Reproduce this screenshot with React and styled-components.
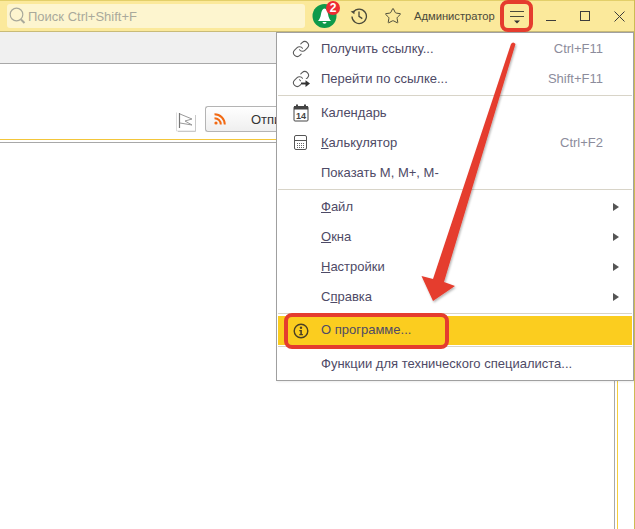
import React from 'react'
import styled, {createGlobalStyle} from 'styled-components'
import {Link, Star} from 'lucide-react'

const GlobalStyle = createGlobalStyle`
  html, body {
    margin: 0;
    padding: 0;
    background: #fff;
  }
  body {
    font-family: "Liberation Sans", Arial, sans-serif;
  }
`

const GoLinkIcon = () => (
  <svg width="18" height="18" viewBox="0 0 24 24" fill="none" stroke="#5a5a5a" strokeWidth="1.4" strokeLinecap="round">
    <path d="M10 13a5 5 0 0 0 7.54.54l3-3a5 5 0 0 0-7.07-7.07l-1.72 1.71"/>
    <path d="M14 11a5 5 0 0 0-7.54-.54l-3 3a5 5 0 0 0 7.07 7.07l1.71-1.71"/>
    <rect x="12" y="12" width="12" height="12" fill="#fff" stroke="none"/>
    <path d="M12 18 h7" stroke="#333" strokeWidth="2.6" strokeLinecap="butt"/>
    <path d="M18 13.5 L24 18 L18 22.5 Z" fill="#333" stroke="none"/>
  </svg>
)

const CalendarIcon = () => (
  <svg width="16" height="18" viewBox="0 0 16 18" fill="none">
    <rect x="1" y="2.5" width="14" height="14.5" rx="1" stroke="#444"/>
    <rect x="1" y="2" width="14" height="3.5" fill="#444"/>
    <rect x="3" y="0.5" width="2" height="3" fill="#444"/>
    <rect x="11" y="0.5" width="2" height="3" fill="#444"/>
    <text x="8" y="14.5" textAnchor="middle" fontSize="9" fontWeight="700" fontFamily="Liberation Sans" fill="#444">14</text>
  </svg>
)

const CalculatorIcon = () => (
  <svg width="14" height="16" viewBox="0 0 14 16" fill="none">
    <rect x="0.5" y="0.5" width="12" height="14" rx="1.5" stroke="#555"/>
    <path d="M1 5.5 h11" stroke="#555"/>
    <path d="M3 8.5 h7 M3 10.5 h7 M3 12.5 h7" stroke="#666" strokeDasharray="1 1"/>
  </svg>
)

const InfoIcon = () => (
  <svg width="16" height="16" viewBox="0 0 16 16" fill="none">
    <circle cx="8" cy="8" r="6.8" stroke="#4a4026" strokeWidth="1.4"/>
    <circle cx="8" cy="4.8" r="1.2" fill="#4a4026"/>
    <path d="M6.3 7 h2.6 v4 h1 v1.2 h-3.6 v-1.2 h1 v-2.8 h-1 z" fill="#4a4026"/>
  </svg>
)

const SearchIcon = () => (
  <svg width="17" height="18" viewBox="0 0 17 18" fill="none" stroke="#a9a99b">
    <circle cx="7.5" cy="7.5" r="6.3" strokeWidth="1.2"/>
    <path d="M12 12.5 L15.5 16" strokeWidth="2"/>
  </svg>
)

const BellIcon = () => (
  <svg width="25" height="24" viewBox="0 0 25 24">
    <circle cx="12.5" cy="12" r="12" fill="#0f9a4b"/>
    <path d="M12.5 4.5 C10.5 4.5 9.5 7 9 10 C8.6 13 7.5 15.5 6 17 H19 C17.5 15.5 16.4 13 16 10 C15.5 7 14.5 4.5 12.5 4.5 Z" fill="#fff"/>
    <path d="M10.5 18 h4 a2 1.8 0 0 1 -4 0 z" fill="#fff"/>
  </svg>
)

const HistoryIcon = () => (
  <svg width="18" height="18" viewBox="0 0 18 18" fill="none" stroke="#4a4a3a" strokeWidth="1.3">
    <path d="M3.3 5.2 A7.2 7.2 0 1 1 2 9.5"/>
    <path d="M0.6 4.6 L4.6 3.4 L4.4 7.2 Z" fill="#4a4a3a" stroke="none"/>
    <path d="M9 4.5 V9.3 L12.3 11.6"/>
  </svg>
)

const MenuGlyph = () => (
  <svg width="16" height="16" viewBox="0 0 16 16">
    <path d="M1 2.5 H15 M1 7.5 H15" stroke="#4a4a3a" strokeWidth="1"/>
    <path d="M5 11.5 H11 L8 14.5 Z" fill="#333"/>
  </svg>
)

const MinimizeIcon = () => (
  <svg width="10" height="10" viewBox="0 0 10 10"><path d="M0 9.5 H10" stroke="#3c3c3c"/></svg>
)

const MaximizeIcon = () => (
  <svg width="10" height="10" viewBox="0 0 10 10" fill="none"><rect x="0.5" y="0.5" width="9" height="9" stroke="#3c3c3c"/></svg>
)

const CloseIcon = () => (
  <svg width="11" height="11" viewBox="0 0 11 11"><path d="M0.5 0.5 L10.5 10.5 M10.5 0.5 L0.5 10.5" stroke="#3c3c3c" strokeWidth="1"/></svg>
)

const FlagIcon = () => (
  <svg width="20" height="20" viewBox="0 0 20 20" fill="none">
    <path d="M0.5 0.5 V19 H19" stroke="#ddd"/>
    <path d="M19.5 3 V19.5 H2" stroke="#c9c9c9"/>
    <path d="M3.5 1 V16" stroke="#777" strokeWidth="1.2"/>
    <path d="M4 2 L16 7 L9 9 L16 13 L4 11" stroke="#999"/>
  </svg>
)

const RssIcon = () => (
  <svg width="12" height="12" viewBox="0 0 12 12" fill="none" stroke="#f26a14" strokeWidth="2">
    <circle cx="2" cy="10" r="1.6" fill="#f26a14" stroke="none"/>
    <path d="M0.5 5.2 A6.3 6.3 0 0 1 6.8 11.5"/>
    <path d="M0.5 1.2 A10.3 10.3 0 0 1 10.8 11.5"/>
  </svg>
)

const top_items = [
  {icon: <Link size={18} strokeWidth={1.4} color="#5a5a5a" />, label: 'Получить ссылку...', shortcut: 'Ctrl+F11'},
  {icon: <GoLinkIcon />, label: 'Перейти по ссылке...', shortcut: 'Shift+F11'},
]
const tool_items = [
  {icon: <CalendarIcon />, label: <>Кален<u>д</u>арь</>},
  {icon: <CalculatorIcon />, label: <><u>К</u>алькулятор</>, shortcut: 'Ctrl+F2'},
  {label: 'Показать M, M+, M-'},
]
const sub_items = [
  <><u>Ф</u>айл</>,
  <><u>О</u>кна</>,
  <><u>Н</u>астройки</>,
  <>С<u>п</u>равка</>,
]

const MenuRow = ({icon, label, shortcut, arrow, active}) => (
  <Row $active={active}>
    <RowIcon>{icon}</RowIcon>
    <RowLabel>{label}</RowLabel>
    {shortcut && <Shortcut>{shortcut}</Shortcut>}
    {arrow && <SubArrow />}
  </Row>
)

export default function App() {
  return (
    <Page>
      <GlobalStyle />
      <TitleBar>
        <SearchField>
          <SearchIcon />
          <SearchText>Поиск Ctrl+Shift+F</SearchText>
        </SearchField>
        <Bell>
          <BellIcon />
          <Badge>2</Badge>
        </Bell>
        <ToolIcon $gap={13}><HistoryIcon /></ToolIcon>
        <ToolIcon $gap={16}><Star size={18} strokeWidth={1.3} color="#4a4a3a" /></ToolIcon>
        <UserName>Администратор</UserName>
        <MenuButton><MenuGlyph /></MenuButton>
        <WindowButtons>
          <MinimizeIcon />
          <MaximizeIcon />
          <CloseIcon />
        </WindowButtons>
      </TitleBar>
      <SubBar />
      <ToolArea>
        <FlagIcon />
        <FeedButton>
          <RssIcon />
          <FeedText>Отпи</FeedText>
        </FeedButton>
      </ToolArea>
      <Content>
        <ContentPane />
      </Content>

      <Menu>
        {top_items.map((item) => <MenuRow key={item.shortcut} {...item} />)}
        <Separator />
        {tool_items.map((item, index) => <MenuRow key={index} {...item} />)}
        <Separator />
        {sub_items.map((label, index) => <MenuRow key={index} label={label} arrow />)}
        <Separator />
        <MenuRow icon={<InfoIcon />} label="О программе..." active />
        <Separator />
        <MenuRow label="Функции для технического специалиста..." />
      </Menu>

      <Annotation viewBox="0 0 635 529">
        <defs>
          <filter id="arrow-shadow" x="-20%" y="-20%" width="140%" height="140%">
            <feDropShadow dx="1" dy="1.5" stdDeviation="1" floodColor="#000" floodOpacity="0.3" />
          </filter>
        </defs>
        <rect x="502" y="2" width="29" height="28" rx="6" fill="none" stroke="#e53c2e" strokeWidth="4" />
        <rect x="286" y="315" width="161" height="32" rx="6" fill="none" stroke="#e53c2e" strokeWidth="4" />
        <path
          d="M511 44 Q513 41 515.5 44 L444 282 L455 286 L433 301 L421.5 276 L433 279 Z"
          fill="#e53c2e"
          filter="url(#arrow-shadow)"
        />
      </Annotation>
    </Page>
  )
}

const Page = styled.div`
  position: relative;
  width: 635px;
  height: 529px;
  overflow: hidden;
  display: flex;
  flex-direction: column;
  box-sizing: border-box;
  border-right: 1px solid #cdbb55;
  background: #fff;
`
const TitleBar = styled.div`
  height: 32px;
  box-sizing: border-box;
  flex: none;
  display: flex;
  align-items: center;
  padding-left: 7px;
  background: #fbe99b;
  border-top: 1px solid #e3cf6a;
  border-bottom: 1px solid #c9bb78;
`
const SearchField = styled.div`
  width: 298px;
  height: 24px;
  box-sizing: border-box;
  flex: none;
  display: flex;
  align-items: center;
  gap: 1px;
  padding-left: 2px;
  background: #fdf5cf;
  border-radius: 3px;
`
const SearchText = styled.span`
  font-size: 13px;
  color: #a9a99b;
  margin-left: 1px;
`
const Bell = styled.div`
  position: relative;
  flex: none;
  width: 25px;
  height: 24px;
  margin-left: 7px;
  & > svg {
    display: block;
  }
`
const Badge = styled.div`
  position: absolute;
  top: -3px;
  left: 14px;
  width: 14px;
  height: 14px;
  border-radius: 50%;
  background: #ee2b33;
  color: #fff;
  font-size: 12px;
  font-weight: 700;
  line-height: 14px;
  text-align: center;
`
const ToolIcon = styled.div`
  flex: none;
  width: 18px;
  height: 18px;
  display: flex;
  align-items: center;
  justify-content: center;
  margin-left: ${({$gap}) => $gap}px;
`
const UserName = styled.span`
  font-size: 11.2px;
  color: #4a4a3a;
  margin: 0 14px 0 12px;
  white-space: nowrap;
`
const MenuButton = styled.div`
  flex: none;
  width: 16px;
  height: 16px;
  margin-top: 2px;
  & > svg {
    display: block;
  }
`
const WindowButtons = styled.div`
  flex: none;
  display: flex;
  align-items: center;
  gap: 24px;
  margin-left: 21px;
`
const SubBar = styled.div`
  height: 32px;
  box-sizing: border-box;
  flex: none;
  background: #f0f0f0;
  border-bottom: 1px solid #a8a8a8;
`
const ToolArea = styled.div`
  height: 76px;
  box-sizing: border-box;
  flex: none;
  display: flex;
  align-items: flex-start;
  gap: 9px;
  padding: 48px 0 0 176px;
  border-bottom: 1px solid #f3c63a;
`
const FeedButton = styled.div`
  width: 71px;
  height: 26px;
  box-sizing: border-box;
  margin-top: -6px;
  display: flex;
  align-items: center;
  padding-left: 8px;
  overflow: hidden;
  white-space: nowrap;
  border: 1px solid #b4b4b4;
  border-right: none;
  border-radius: 3px 0 0 3px;
  background: linear-gradient(#ffffff, #efefef);
  & > svg {
    flex: none;
  }
`
const FeedText = styled.span`
  flex: none;
  font-size: 13px;
  color: #333;
  margin-left: 25px;
`
const Content = styled.div`
  flex: 1;
  padding-top: 2px;
  display: flex;
  flex-direction: column;
`
const ContentPane = styled.div`
  flex: 1;
  width: 618px;
  box-sizing: border-box;
  border-top: 1px solid #a8a8a8;
  border-right: 1px solid #f6cf3c;
  position: relative;
  &::after {
    content: '';
    position: absolute;
    top: 0;
    bottom: 0;
    right: 2px;
    width: 1px;
    background: #a8a8a8;
  }
`
const Menu = styled.div`
  position: absolute;
  top: 32px;
  left: 276px;
  width: 358px;
  height: 349px;
  box-sizing: border-box;
  padding-top: 1px;
  background: #fff;
  border: 1px solid #a0a0a0;
  box-shadow: 1px 1px 2px rgba(0, 0, 0, 0.08);
`
const Row = styled.div`
  height: ${({$active}) => $active ? '29px' : '30px'};
  display: flex;
  align-items: center;
  padding: 0 13px 0 0;
  margin: 0 1px ${({$active}) => $active ? '1px' : '0'};
  font-size: 13px;
  color: #4e4a66;
  background: ${({$active}) => $active ? '#fbcd1f' : 'transparent'};
`
const RowIcon = styled.div`
  width: 43px;
  box-sizing: border-box;
  padding-left: 3px;
  display: flex;
  justify-content: center;
  flex: none;
  & > svg {
    display: block;
  }
`
const RowLabel = styled.span`
  flex: 1;
  white-space: nowrap;
  padding-bottom: 2px;
`
const Shortcut = styled.span`
  color: #8c8c9c;
  padding: 0 16px 2px 0;
`
const SubArrow = styled.div`
  width: 0;
  height: 0;
  border-left: 6px solid #555;
  border-top: 4.5px solid transparent;
  border-bottom: 4.5px solid transparent;
`
const Separator = styled.div`
  height: 1px;
  margin: 1px 1px 2px;
  background: #d8d4c8;
`
const Annotation = styled.svg`
  position: absolute;
  top: 0;
  left: 0;
  width: 635px;
  height: 529px;
  pointer-events: none;
`
